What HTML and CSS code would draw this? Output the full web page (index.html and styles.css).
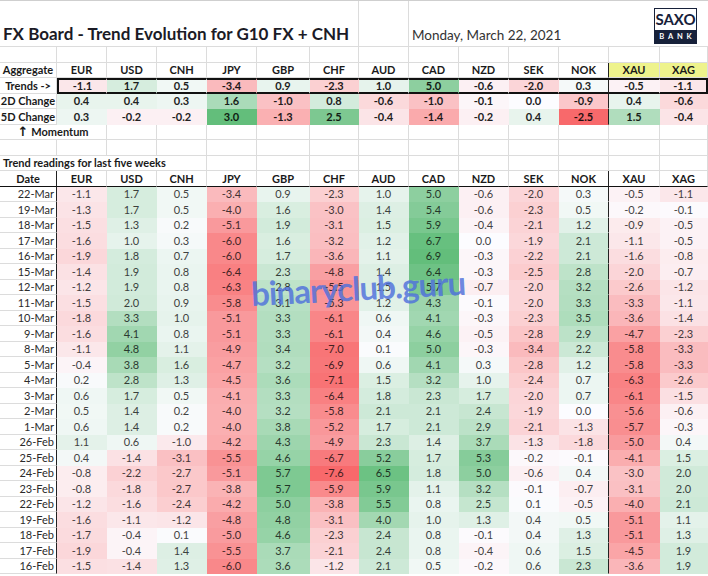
FILE: index.html
```html
<!DOCTYPE html>
<html lang="en">
<head>
<meta charset="utf-8">
<title>FX Board - Trend Evolution</title>
<link rel="stylesheet" href="styles.css">
</head>
<body>
<div class="sheet">
  <div class="title-row">
    <h1 class="title">FX Board - Trend Evolution for G10 FX + CNH</h1>
    <div class="spacer"></div>
    <div class="date">Monday, March 22, 2021</div>
    <div class="logo"><div class="saxo">SAXO</div><div class="bank">BANK</div></div>
  </div>

  <div class="row"><span></span><span></span><span></span><span></span><span></span><span></span><span></span><span></span><span></span><span></span><span></span><span></span><span></span><span></span></div>
  <div class="row head k"><span>Aggregate</span><span>EUR</span><span>USD</span><span>CNH</span><span>JPY</span><span>GBP</span><span>CHF</span><span>AUD</span><span>CAD</span><span>NZD</span><span>SEK</span><span>NOK</span><span class="gold">XAU</span><span class="gold">XAG</span></div>
  <div class="row sum trend k"><span>Trends -&gt;</span><span>-1.1</span><span>1.7</span><span>0.5</span><span>-3.4</span><span>0.9</span><span>-2.3</span><span>1.0</span><span>5.0</span><span>-0.6</span><span>-2.0</span><span>0.3</span><span>-0.5</span><span>-1.1</span></div>
  <div class="row sum chg k"><span>2D Change</span><span>0.4</span><span>0.4</span><span>0.3</span><span>1.6</span><span>-1.0</span><span>0.8</span><span>-0.6</span><span>-1.0</span><span>-0.1</span><span>0.0</span><span>-0.9</span><span>0.4</span><span>-0.6</span></div>
  <div class="row sum chg k"><span>5D Change</span><span>0.3</span><span>-0.2</span><span>-0.2</span><span>3.0</span><span>-1.3</span><span>2.5</span><span>-0.4</span><span>-1.4</span><span>-0.2</span><span>0.4</span><span>-2.5</span><span>1.5</span><span>-0.4</span></div>
  <div class="row"><span class="momentum"><b class="arrow">↑</b> Momentum</span><span></span><span></span><span></span><span></span><span></span><span></span><span></span><span></span><span></span><span></span><span></span><span></span></div>
  <div class="row"><span></span><span></span><span></span><span></span><span></span><span></span><span></span><span></span><span></span><span></span><span></span><span></span><span></span><span></span></div>
  <div class="row"><span class="section">Trend readings for last five weeks</span><span></span><span></span><span></span><span></span><span></span><span></span><span></span><span></span><span></span><span></span></div>
  <div class="row dhead dt k"><span>Date</span><span>EUR</span><span>USD</span><span>CNH</span><span>JPY</span><span>GBP</span><span>CHF</span><span>AUD</span><span>CAD</span><span>NZD</span><span>SEK</span><span>NOK</span><span>XAU</span><span>XAG</span></div>

  <div class="row data dt k"><span>22-Mar</span><span>-1.1</span><span>1.7</span><span>0.5</span><span>-3.4</span><span>0.9</span><span>-2.3</span><span>1.0</span><span>5.0</span><span>-0.6</span><span>-2.0</span><span>0.3</span><span>-0.5</span><span>-1.1</span></div>
  <div class="row data dt k"><span>19-Mar</span><span>-1.3</span><span>1.7</span><span>0.5</span><span>-4.0</span><span>1.6</span><span>-3.0</span><span>1.4</span><span>5.4</span><span>-0.6</span><span>-2.3</span><span>0.5</span><span>-0.2</span><span>-0.1</span></div>
  <div class="row data dt k"><span>18-Mar</span><span>-1.5</span><span>1.3</span><span>0.2</span><span>-5.1</span><span>1.9</span><span>-3.1</span><span>1.5</span><span>5.9</span><span>-0.4</span><span>-2.1</span><span>1.2</span><span>-0.9</span><span>-0.5</span></div>
  <div class="row data dt k"><span>17-Mar</span><span>-1.6</span><span>1.0</span><span>0.3</span><span>-6.0</span><span>1.6</span><span>-3.2</span><span>1.2</span><span>6.7</span><span>0.0</span><span>-1.9</span><span>2.1</span><span>-1.1</span><span>-0.5</span></div>
  <div class="row data dt k"><span>16-Mar</span><span>-1.9</span><span>1.8</span><span>0.7</span><span>-6.0</span><span>1.7</span><span>-3.6</span><span>1.1</span><span>6.9</span><span>-0.3</span><span>-2.2</span><span>2.1</span><span>-1.6</span><span>-0.8</span></div>
  <div class="row data dt k"><span>15-Mar</span><span>-1.4</span><span>1.9</span><span>0.8</span><span>-6.4</span><span>2.3</span><span>-4.8</span><span>1.4</span><span>6.4</span><span>-0.3</span><span>-2.5</span><span>2.8</span><span>-2.0</span><span>-0.7</span></div>
  <div class="row data dt k"><span>12-Mar</span><span>-1.2</span><span>1.9</span><span>0.8</span><span>-6.3</span><span>2.8</span><span>-5.5</span><span>1.5</span><span>5.7</span><span>-0.7</span><span>-2.0</span><span>3.2</span><span>-2.6</span><span>-1.2</span></div>
  <div class="row data dt k"><span>11-Mar</span><span>-1.5</span><span>2.0</span><span>0.9</span><span>-5.8</span><span>3.1</span><span>-5.3</span><span>1.2</span><span>4.3</span><span>-0.1</span><span>-2.0</span><span>3.3</span><span>-3.3</span><span>-1.1</span></div>
  <div class="row data dt k"><span>10-Mar</span><span>-1.8</span><span>3.3</span><span>1.0</span><span>-5.1</span><span>3.3</span><span>-6.1</span><span>0.6</span><span>4.1</span><span>-0.3</span><span>-2.3</span><span>3.5</span><span>-3.6</span><span>-1.4</span></div>
  <div class="row data dt k"><span>9-Mar</span><span>-1.6</span><span>4.1</span><span>0.8</span><span>-5.1</span><span>3.3</span><span>-6.1</span><span>0.4</span><span>4.6</span><span>-0.5</span><span>-2.8</span><span>2.9</span><span>-4.7</span><span>-2.3</span></div>
  <div class="row data dt k"><span>8-Mar</span><span>-1.1</span><span>4.8</span><span>1.1</span><span>-4.9</span><span>3.4</span><span>-7.0</span><span>0.1</span><span>5.0</span><span>-0.3</span><span>-3.4</span><span>2.2</span><span>-5.8</span><span>-3.3</span></div>
  <div class="row data dt k"><span>5-Mar</span><span>-0.4</span><span>3.8</span><span>1.6</span><span>-4.7</span><span>3.2</span><span>-6.9</span><span>0.6</span><span>4.1</span><span>0.3</span><span>-2.8</span><span>1.2</span><span>-5.8</span><span>-3.3</span></div>
  <div class="row data dt k"><span>4-Mar</span><span>0.2</span><span>2.8</span><span>1.3</span><span>-4.5</span><span>3.6</span><span>-7.1</span><span>1.5</span><span>3.2</span><span>1.0</span><span>-2.4</span><span>0.7</span><span>-6.3</span><span>-2.6</span></div>
  <div class="row data dt k"><span>3-Mar</span><span>0.6</span><span>1.7</span><span>0.5</span><span>-4.1</span><span>3.3</span><span>-6.4</span><span>1.8</span><span>2.3</span><span>1.7</span><span>-2.0</span><span>0.7</span><span>-6.1</span><span>-1.5</span></div>
  <div class="row data dt k"><span>2-Mar</span><span>0.5</span><span>1.4</span><span>0.2</span><span>-4.0</span><span>3.2</span><span>-5.8</span><span>2.1</span><span>2.1</span><span>2.4</span><span>-1.9</span><span>0.0</span><span>-5.6</span><span>-0.6</span></div>
  <div class="row data dt k"><span>1-Mar</span><span>0.6</span><span>1.4</span><span>0.2</span><span>-4.0</span><span>3.8</span><span>-5.2</span><span>1.7</span><span>2.1</span><span>2.9</span><span>-2.1</span><span>-1.3</span><span>-5.7</span><span>-0.3</span></div>
  <div class="row data dt k"><span>26-Feb</span><span>1.1</span><span>0.6</span><span>-1.0</span><span>-4.2</span><span>4.3</span><span>-4.9</span><span>2.3</span><span>1.4</span><span>3.7</span><span>-1.3</span><span>-1.8</span><span>-5.0</span><span>0.4</span></div>
  <div class="row data dt k"><span>25-Feb</span><span>0.4</span><span>-1.4</span><span>-3.1</span><span>-5.5</span><span>4.6</span><span>-6.7</span><span>5.2</span><span>1.7</span><span>5.3</span><span>-0.2</span><span>-0.1</span><span>-4.1</span><span>1.5</span></div>
  <div class="row data dt k"><span>24-Feb</span><span>-0.8</span><span>-2.2</span><span>-2.7</span><span>-5.1</span><span>5.7</span><span>-7.6</span><span>6.5</span><span>1.8</span><span>5.0</span><span>-0.6</span><span>0.4</span><span>-3.0</span><span>2.0</span></div>
  <div class="row data dt k"><span>23-Feb</span><span>-0.8</span><span>-1.8</span><span>-2.7</span><span>-3.8</span><span>5.7</span><span>-5.9</span><span>5.9</span><span>1.1</span><span>3.2</span><span>-0.1</span><span>-0.7</span><span>-3.1</span><span>2.0</span></div>
  <div class="row data dt k"><span>22-Feb</span><span>-1.2</span><span>-1.6</span><span>-2.4</span><span>-4.2</span><span>5.0</span><span>-3.8</span><span>5.5</span><span>0.8</span><span>2.5</span><span>0.1</span><span>-0.5</span><span>-4.0</span><span>2.1</span></div>
  <div class="row data dt k"><span>19-Feb</span><span>-1.6</span><span>-1.1</span><span>-1.2</span><span>-4.8</span><span>4.8</span><span>-3.1</span><span>4.0</span><span>1.0</span><span>1.3</span><span>0.4</span><span>0.5</span><span>-5.1</span><span>1.1</span></div>
  <div class="row data dt k"><span>18-Feb</span><span>-1.7</span><span>-0.4</span><span>0.1</span><span>-5.0</span><span>4.6</span><span>-2.3</span><span>2.4</span><span>0.8</span><span>-0.1</span><span>0.4</span><span>1.3</span><span>-5.1</span><span>1.3</span></div>
  <div class="row data dt k"><span>17-Feb</span><span>-1.9</span><span>-0.4</span><span>1.4</span><span>-5.5</span><span>3.7</span><span>-2.1</span><span>2.4</span><span>0.8</span><span>-0.4</span><span>0.6</span><span>1.5</span><span>-4.5</span><span>1.9</span></div>
  <div class="row data dt k"><span>16-Feb</span><span>-1.5</span><span>-1.4</span><span>1.3</span><span>-6.0</span><span>3.6</span><span>-1.2</span><span>2.1</span><span>0.5</span><span>-0.2</span><span>0.6</span><span>2.3</span><span>-3.6</span><span>1.9</span></div>

  <div class="watermark">binaryclub.guru</div>
</div>
<script src="script.js"></script>
</body>
</html>
```

FILE: styles.css
```css
:root {
  --cols: 57px 50px 50px 50px 50px 53px 49px 50px 50px 50px 50px 50px 51px 48px;
  --grid: #dcdcdc;
  --ink: #111;
  --navy: #17213a;
}
* { box-sizing: border-box; }
body {
  margin: 0;
  background: #fff;
  font-family: Lato, "Open Sans", "DejaVu Sans", sans-serif;
  color: #222;
}
.sheet {
  position: relative;
  width: 708px;
  height: 576px;
  overflow: hidden;
}

/* title band */
.title-row {
  display: grid;
  grid-template-columns: var(--cols);
  height: 47px;
  border-top: 1px solid #cfcfcf;
  border-bottom: 1px solid var(--grid);
}
.title {
  grid-column: 1 / 8;
  margin: 0;
  padding: 0 0 2px 3px;
  font-size: 17px;
  font-weight: 700;
  color: #1b1b26;
  white-space: nowrap;
  border-right: 1px solid var(--grid);
  display: flex;
  align-items: flex-end;
}
.spacer {
  grid-column: 8;
  border-right: 1px solid var(--grid);
}
.date {
  grid-column: 9 / 13;
  align-self: end;
  padding: 0 0 3px 3px;
  font-size: 13.5px;
  color: #333;
  white-space: nowrap;
}
.logo {
  grid-column: 13 / 15;
  justify-self: end;
  align-self: start;
  margin: 7px 11px 0 0;
  width: 43px;
  display: flex;
  flex-direction: column;
  border: 1.5px solid var(--navy);
}
.saxo {
  font-size: 15px;
  font-weight: 700;
  color: var(--navy);
  text-align: center;
  line-height: 21px;
}
.bank {
  background: var(--navy);
  color: #fff;
  font-size: 7.5px;
  font-weight: 700;
  letter-spacing: 3.8px;
  padding-left: 3.8px;
  text-align: center;
  line-height: 13px;
}

/* sheet rows */
.row {
  display: grid;
  grid-template-columns: var(--cols);
  height: 15.5px;
}
.row > span {
  display: flex;
  align-items: center;
  justify-content: center;
  border-right: 1px solid var(--grid);
  border-bottom: 1px solid var(--grid);
  font-size: 11px;
  line-height: 1;
  white-space: nowrap;
}
.head > span,
.sum > span,
.dhead > span { font-weight: 700; color: #1a1a1a; }
.gold { background: #eef38c; }

.momentum {
  grid-column: 1 / 3;
  font-weight: 700;
  color: #1a1a1a;
}
.arrow {
  font-family: "DejaVu Sans", sans-serif;
  font-size: 13px;
  font-weight: 700;
  margin-right: 3px;
}
.section {
  grid-column: 1 / 5;
  justify-content: flex-start !important;
  padding-left: 3px;
  font-weight: 700;
  color: #1a1a1a;
}

/* coloured value cells hide the gridlines */
.row > .v { border-color: transparent; }
.trend > .v {
  border-top: 2px solid var(--ink);
  border-bottom: 2px solid var(--ink);
}
.trend > span:nth-child(2) { border-left: 2px solid var(--ink); }
.trend > span:last-child { border-right: 2px solid var(--ink); }

.k > span:nth-child(12) { border-right: 1px solid #222; }
.dt > span:first-child { border-right: 1px solid #222; }
.dhead > span { border-bottom: 1.5px solid var(--ink); }

.data > span { font-weight: 400; }
.data > span:first-child {
  justify-content: flex-end;
  padding-right: 2px;
  color: #2b2b2b;
}

.watermark {
  position: absolute;
  left: 251px;
  top: 273px;
  font-size: 33px;
  font-weight: 700;
  letter-spacing: -0.9px;
  color: rgba(78, 112, 220, 0.82);
  transform: rotate(-3deg);
  transform-origin: left center;
  pointer-events: none;
  white-space: nowrap;
}
```

FILE: script.js
```js
(function () {
  var WHITE = [252, 252, 255];
  var GREEN = [99, 190, 123];
  var RED = [248, 105, 107];

  function mix(a, b, t) {
    return a.map(function (x, i) { return Math.round(x + (b[i] - x) * t); });
  }

  function paint(row, min, max, k) {
    var cells = row.querySelectorAll('span');
    for (var i = 1; i < cells.length; i++) {
      var c = cells[i];
      var v = parseFloat(c.textContent);
      if (isNaN(v)) continue;
      var bg = v >= 0 ? mix(WHITE, GREEN, Math.min(v / max, 1))
                      : mix(WHITE, RED, Math.min(v / min, 1));
      c.classList.add('v');
      c.style.background = 'rgb(' + bg.join(',') + ')';
      c.style.color = 'rgb(' + bg.map(function (x) { return Math.round(x * k); }).join(',') + ')';
    }
  }

  document.querySelectorAll('.row.data').forEach(function (r) { paint(r, -7.6, 6.9, 0.27); });
  document.querySelectorAll('.row.trend').forEach(function (r) { paint(r, -7.6, 6.9, 0.12); });
  document.querySelectorAll('.row.chg').forEach(function (r) { paint(r, -2.5, 3.0, 0.14); });
})();
```
